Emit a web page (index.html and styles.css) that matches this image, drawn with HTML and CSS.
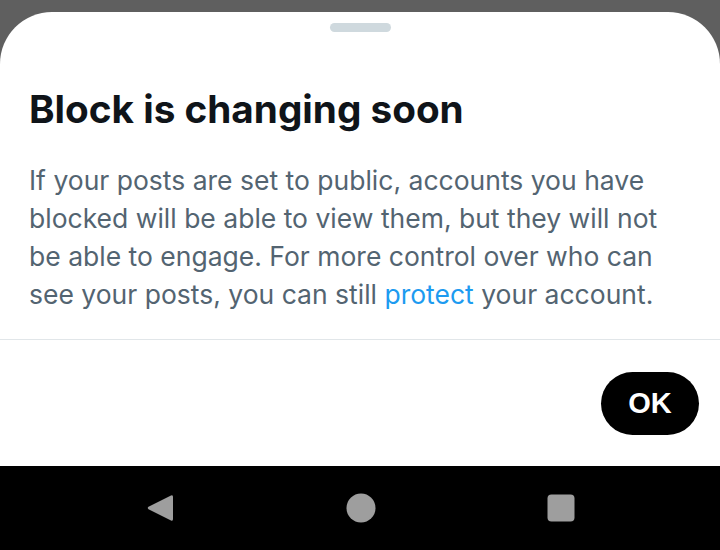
FILE: index.html
```html
<!DOCTYPE html>
<html>
<head>
<meta charset="utf-8">
<link rel="stylesheet" href="styles.css">
</head>
<body>
<div class="screen">
  <div class="sheet">
    <div class="handle"></div>
    <h1 class="title">Block is changing soon</h1>
    <p class="body">If your posts are set to public, accounts you have blocked will be able to view them, but they will not be able to engage. For more control over who can see your posts, you can still <span class="link">protect</span> your account.</p>
    <div class="divider"></div>
    <div class="actions">
      <button class="ok">OK</button>
    </div>
  </div>
  <nav class="navbar">
    <svg class="nav-icon" width="28" height="30" viewBox="0 0 28 30"><path d="M25 2.5 Q27 1.5 27 4 L27 26 Q27 28.5 25 27.5 L2.5 16.2 Q1 15 2.5 13.8 Z" fill="#9e9e9e"/></svg>
    <svg class="nav-icon" width="30" height="30" viewBox="0 0 30 30"><circle cx="15" cy="15" r="14.5" fill="#9e9e9e"/></svg>
    <svg class="nav-icon" width="28" height="28" viewBox="0 0 28 28"><rect x="0.5" y="0.5" width="27" height="27" rx="4" fill="#9e9e9e"/></svg>
  </nav>
</div>
</body>
</html>
```

FILE: styles.css
```css
html, body {
  margin: 0;
  padding: 0;
}
body {
  width: 720px;
  height: 550px;
  background: #5f5f5f;
  overflow: hidden;
  font-family: Inter, "Liberation Sans", sans-serif;
}
.screen {
  display: flex;
  flex-direction: column;
  height: 550px;
}
.sheet {
  margin-top: 12px;
  height: 454px;
  background: #ffffff;
  border-radius: 52px 52px 0 0;
  display: flex;
  flex-direction: column;
}
.handle {
  width: 61px;
  height: 9px;
  border-radius: 5px;
  background: #cfd9de;
  margin: 11px auto 0;
}
.title {
  margin: 53px 0 0 29px;
  font-size: 38.7px;
  line-height: 48px;
  font-weight: 700;
  color: #0f1419;
  letter-spacing: 0;
}
.body {
  margin: 28px 29px 0 29px;
  font-size: 26.5px;
  line-height: 38px;
  color: #536471;
}
.link {
  color: #1d9bf0;
}
.divider {
  margin-top: 26px;
  height: 1px;
  background: #e1e6e9;
}
.actions {
  display: flex;
  justify-content: flex-end;
  padding: 32px 21px 0 0;
}
.ok {
  width: 98px;
  height: 63px;
  border: none;
  border-radius: 32px;
  background: #000000;
  color: #ffffff;
  font-family: "Liberation Sans", Arial, sans-serif;
  font-weight: 700;
  font-size: 29px;
  cursor: pointer;
}
.navbar {
  flex: 1;
  background: #000000;
  display: flex;
  align-items: center;
  justify-content: space-between;
  padding: 0 145px 0 146px;
}
.nav-icon {
  display: block;
}
```
